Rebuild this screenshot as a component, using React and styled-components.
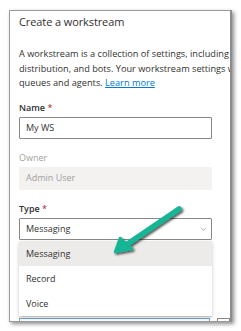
import React from "react";
import styled, { createGlobalStyle } from "styled-components";

const Global = createGlobalStyle`
  html, body {
    margin: 0;
    background: #ffffff;
  }
  body {
    font-family: "Open Sans", "Noto Sans", sans-serif;
    color: #323130;
  }
`;

export default function App() {
  return (
    <Page>
      <Global />
      <Panel>
        <Title>Create a workstream</Title>
        <Intro>
          A workstream is a collection of settings, including
          <br />
          distribution, and bots. Your workstream settings will
          <br />
          queues and agents. <a href="#">Learn more</a>
        </Intro>

        <Field gap={10}>
          <Label>
            Name <Req>*</Req>
          </Label>
          <Input>My WS</Input>
        </Field>

        <Field gap={12}>
          <Label muted>Owner</Label>
          <Input disabled>Admin User</Input>
        </Field>

        <Field gap={12}>
          <Label>
            Type <Req>*</Req>
          </Label>
          <Select>
            Messaging
            <Chevron viewBox="0 0 10 6">
              <path d="M1 1 L5 5 L9 1" />
            </Chevron>
          </Select>
          <Menu>
            <Option active>Messaging</Option>
            <Option>Record</Option>
            <Option>Voice</Option>
          </Menu>
        </Field>

        <BottomRow>
          <FocusedBox />
          <SmallBox />
        </BottomRow>

        <Arrow viewBox="0 0 80 60">
          <defs>
            <filter id="sh" x="-20%" y="-20%" width="150%" height="150%">
              <feDropShadow dx="1.5" dy="1.5" stdDeviation="0.8" floodColor="#000" floodOpacity="0.7" />
            </filter>
          </defs>
          <g filter="url(#sh)">
            <line x1="73" y1="9" x2="20" y2="45" stroke="#17b596" strokeWidth="5.5" strokeLinecap="round" />
            <path d="M9 52 L14 38 L26 49 Z" fill="#17b596" stroke="#17b596" strokeWidth="2.5" strokeLinejoin="round" />
          </g>
        </Arrow>
      </Panel>
    </Page>
  );
}

const Page = styled.div`
  padding: 10px 9px;
  width: 241px;
  height: 331px;
  box-sizing: border-box;
`;

const Panel = styled.div`
  position: relative;
  width: 223px;
  height: 312px;
  box-sizing: border-box;
  border: 1px solid #9a9a9a;
  border-right: 2px solid #8c8c8c;
  box-shadow: 2px 2px 4px rgba(0, 0, 0, 0.45);
  overflow: hidden;
  padding: 4px 0 0 9px;
  background: #fff;
`;

const Title = styled.div`
  font-size: 11px;
  line-height: 14px;
  color: #323130;
  letter-spacing: -0.1px;
`;

const Intro = styled.div`
  margin-top: 18px;
  font-size: 9.2px;
  line-height: 14.5px;
  white-space: nowrap;
  color: #323130;

  a {
    color: #0078d4;
    text-decoration: underline;
  }
`;

const Field = styled.div`
  position: relative;
  margin-top: ${(p) => p.gap}px;
  width: 193px;
`;

const Label = styled.div`
  font-size: 9px;
  line-height: 14px;
  color: ${(p) => (p.muted ? "#a19f9d" : "#323130")};
  font-weight: ${(p) => (p.muted ? 400 : 600)};
`;

const Req = styled.span`
  color: #a4262c;
  font-weight: 400;
`;

const Input = styled.div`
  margin-top: 2px;
  height: ${(p) => (p.disabled ? 23 : 22)}px;
  box-sizing: border-box;
  border: 1px solid ${(p) => (p.disabled ? "#f3f2f1" : "#8a8886")};
  background: ${(p) => (p.disabled ? "#f3f2f1" : "#fff")};
  color: ${(p) => (p.disabled ? "#a19f9d" : "#323130")};
  border-radius: 1px;
  font-size: 9px;
  line-height: 20px;
  padding: 0 6px;
`;

const Select = styled(Input)`
  display: flex;
  align-items: center;
  justify-content: space-between;
  padding-right: 4px;
`;

const Chevron = styled.svg`
  width: 7px;
  height: 4px;
  fill: none;
  stroke: #8a8886;
  stroke-width: 1;
`;

const Menu = styled.div`
  position: absolute;
  left: 0;
  right: 0;
  top: 39px;
  background: #fff;
  box-shadow: 0 1.5px 4px rgba(0, 0, 0, 0.2), 0 0.5px 1px rgba(0, 0, 0, 0.12);
  z-index: 2;
`;

const Option = styled.div`
  height: 25px;
  line-height: 25px;
  padding: 0 7px;
  font-size: 9px;
  color: #323130;
  background: ${(p) => (p.active ? "#edebe9" : "#fff")};
`;

const BottomRow = styled.div`
  display: flex;
  gap: 7px;
  margin-top: 78px;
`;

const FocusedBox = styled.div`
  width: 200px;
  height: 22px;
  box-sizing: border-box;
  border: 1px solid #6fa8dc;
`;

const SmallBox = styled.div`
  width: 14px;
  height: 22px;
  box-sizing: border-box;
  border: 1px solid #8a8886;
`;

const Arrow = styled.svg`
  position: absolute;
  left: 96px;
  top: 189px;
  width: 80px;
  height: 60px;
  z-index: 3;
  overflow: visible;
`;
